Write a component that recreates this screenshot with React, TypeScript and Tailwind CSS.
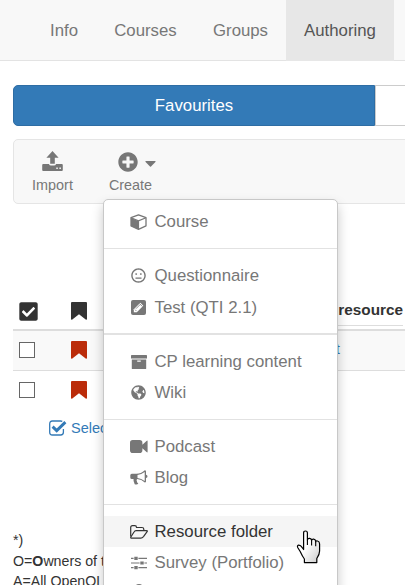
import type { ReactNode } from "react";
import {
  FaCheckSquare,
  FaGlobeAmericas,
  FaPlusCircle,
  FaRegMeh,
} from "react-icons/fa";

const UploadIcon = () => (
  <svg width="21" height="21" viewBox="0 0 21 21" fill="currentColor">
    <path d="M10.5 0 16.6 6.8H12.8V12.8H8.2V6.8H4.4Z" />
    <path
      fillRule="evenodd"
      d="M1.2 12.9H6.9Q7.5 14.5 9 14.5H12Q13.5 14.5 14.1 12.9H19.8Q20.8 12.9 20.8 13.9V18.9Q20.8 19.9 19.8 19.9H1.2Q.2 19.9.2 18.9V13.9Q.2 12.9 1.2 12.9ZM14.3 16.5V18H15.8V16.5ZM17.4 16.5V18H18.9V16.5Z"
    />
  </svg>
);

const CaretIcon = () => (
  <svg width="11" height="6" viewBox="0 0 11 6" className="mt-[5px] shrink-0" fill="currentColor">
    <path d="M.8 0H10.2Q11 .2 10.4 1L6 5.6Q5.5 6 5 5.6L.6 1Q0 .2.8 0Z" />
  </svg>
);

const BookmarkIcon = () => (
  <svg width="16" height="18" viewBox="0 0 16 18" fill="currentColor">
    <path d="M1 0H15Q16 0 16 1V17Q16 18 15 17.8L8 12.2 1 17.8Q0 18 0 17V1Q0 0 1 0Z" />
  </svg>
);

const CheckOutlineIcon = () => (
  <svg width="18" height="16" viewBox="0 0 18 16" fill="none" stroke="currentColor">
    <path d="M14.4 9V12.2Q14.4 15 11.6 15H3.4Q.7 15 .7 12.2V4Q.7 1 3.4 1H11.6Q12.7 1 13.3 1.3" strokeWidth="1.3" />
    <path d="M3.6 6.6 7.7 10.6 16.4 2.1" strokeWidth="2.9" />
  </svg>
);

const CubeIcon = () => (
  <svg width="17" height="16" viewBox="0 0 17 16">
    <path d="M8.5.8 16 3.7V11.9L8.5 15.3 1 11.9V3.7Z" fill="none" stroke="currentColor" strokeWidth="1.3" strokeLinejoin="round" />
    <path d="M1 4 8.5 7V15.3L1 11.9Z" fill="currentColor" />
    <path d="M1 3.8 8.5 6.8 16 3.8M8.5 7V15" fill="none" stroke="currentColor" strokeWidth="1.2" />
  </svg>
);

const PencilSquareIcon = () => (
  <svg width="15" height="15" viewBox="0 0 15 15">
    <rect width="15" height="15" rx="2" fill="currentColor" />
    <path d="M2.8 9.2 9.3 2.7 12.3 5.7 5.8 12.2H2.8Z" fill="#fff" />
    <path d="m4 9.6 1.5 1.5M5 8.7 9.2 4.5M8.5 3.6l2.9 2.9" stroke="currentColor" strokeWidth=".8" />
  </svg>
);

const ArchiveIcon = () => (
  <svg width="16" height="14" viewBox="0 0 16 14" fill="currentColor">
    <path d="M.6 0H15.4Q16 0 16 .6V3.4H0V.6Q0 0 .6 0Z" />
    <path fillRule="evenodd" d="M.8 4.4H15.2V13.4Q15.2 14 14.6 14H1.4Q.8 14 .8 13.4ZM6.4 5.5Q5.8 6.1 6.4 6.7H9.6Q10.2 6.1 9.6 5.5Z" />
  </svg>
);

const VideoIcon = () => (
  <svg width="18" height="13" viewBox="0 0 18 13" fill="currentColor">
    <path d="M2.7 0H9.6Q12.4 0 12.4 2.8V4.8L16.5.9Q17.6 0 17.6 1.3V11.7Q17.6 13 16.5 12.1L12.4 8.2V10.2Q12.4 13 9.6 13H2.7Q0 13 0 10.2V2.8Q0 0 2.7 0Z" />
  </svg>
);

const BullhornIcon = () => (
  <svg width="18" height="15" viewBox="0 0 18 15">
    <path
      d="M14.8.3Q16 .3 16 1.5V4.8Q17.5 5.2 17.5 6.4T16 8V11.5Q16 12.6 14.8 12.6 11.5 9.4 7.2 9 6 10 6.9 11.2 6.5 12.1 8.3 13.5 7.3 15 4.7 14.2 3.1 11.3 3.5 9.1H1.8Q.3 9.1.3 7.6V5.3Q.3 3.8 1.8 3.8H6.5Q11 3.8 14.8.3Z"
      fill="currentColor"
    />
    <path d="M14.7 2Q11.2 4.7 7.5 4.9V8Q11.2 8.3 14.7 11Z" fill="#fff" />
  </svg>
);

const FolderIcon = () => (
  <svg width="18" height="14" viewBox="0 0 18 14" fill="none" stroke="currentColor" strokeWidth="1.2" strokeLinejoin="round">
    <path d="M.7 11.6V2.5Q.7.7 2.5.7H4.8Q6.5.7 6.5 2.5H12Q13.8 2.5 13.8 4.3V5.6" />
    <path d="M6 5.6H16.4Q17.9 5.6 17.1 6.7L13.5 11.6Q12.2 13.2 10.8 13.2H2Q.1 13.2 1 11.7L4 7Q4.8 5.6 6 5.6Z" />
  </svg>
);

const SlidersIcon = () => (
  <svg width="16" height="14" viewBox="0 0 16 14" stroke="currentColor" strokeWidth="1.2">
    <path d="M0 2.4H2.6M7.4 2.4H16M0 7H8.6M13.4 7H16M0 11.6H2.6M7.4 11.6H16" />
    <path d="M3.3 2.4H6.7M9.3 7H12.7M3.3 11.6H6.7" strokeWidth="3.2" />
  </svg>
);

const HandCursor = () => (
  <svg width="25" height="34" viewBox="0 0 25 34">
    <defs>
      <linearGradient id="hand" x1="0" y1="0" x2="1" y2="1">
        <stop offset=".45" stopColor="#fff" />
        <stop offset="1" stopColor="#c9c9c9" />
      </linearGradient>
    </defs>
    <path
      d="M7.6 19.5V3Q7.6 1 9.5 1T11.4 3V10Q11.6 8.2 13.6 8.4 15.6 8.6 15.6 10.6 15.8 8.9 17.7 9.2 19.7 9.5 19.7 11.8 19.9 10.5 21.6 11 23.6 11.5 23.6 14V21Q23.6 24.5 20.8 28.5V32.6H8.4V29Q6.5 26.5 4.2 21.5L1.7 17.5Q1 15.6 2.5 15.2 4.5 15 6.3 17.7Z"
      fill="url(#hand)"
      stroke="#000"
      strokeWidth="1.2"
      strokeLinejoin="round"
    />
    <path d="M11.4 10V15M15.6 10.8V15.5M19.7 12V16.2" stroke="#000" strokeWidth="1.1" />
  </svg>
);

function MenuItem({ icon, label, active = false }: { icon: ReactNode; label: string; active?: boolean }) {
  return (
    <li className={active ? "flex h-[31px] items-center bg-[#f5f5f5] pl-[26px] text-[#333]" : "flex h-[31px] items-center pl-[26px] text-[#777]"}>
      <span className="-ml-px flex w-[19px] justify-center">{icon}</span>
      <span className="ml-[6.5px] whitespace-nowrap">{label}</span>
    </li>
  );
}

const Divider = () => <li className="mt-[11px] mb-[11px] h-px bg-[#e2e2e2]" />;

function CreateMenu() {
  return (
    <ul className="absolute top-[199px] left-[103px] h-[400px] w-[235px] rounded-t-[5px] border border-[#c8c8c8] bg-white pt-[6px] text-[16.8px] shadow-[0_6px_12px_rgba(0,0,0,0.22)]">
      <MenuItem icon={<CubeIcon />} label="Course" />
      <Divider />
      <MenuItem icon={<FaRegMeh size={15} />} label="Questionnaire" />
      <li className="h-px" />
      <MenuItem icon={<PencilSquareIcon />} label="Test (QTI 2.1)" />
      <li className="mt-[10px] mb-[11px] h-[2px] bg-[#e2e2e2]" />
      <MenuItem icon={<ArchiveIcon />} label="CP learning content" />
      <MenuItem icon={<FaGlobeAmericas size={15} />} label="Wiki" />
      <Divider />
      <MenuItem icon={<VideoIcon />} label="Podcast" />
      <MenuItem icon={<BullhornIcon />} label="Blog" />
      <Divider />
      <MenuItem icon={<FolderIcon />} label="Resource folder" active />
      <MenuItem icon={<SlidersIcon />} label="Survey (Portfolio)" />
      <li className="flex h-[31px] pt-[6px] pl-[31px] text-[#777]">
        <span className="h-2 w-2 rounded-full bg-[#777]" />
      </li>
    </ul>
  );
}

export default function App() {
  return (
    <div className="relative h-[585px] w-[405px] overflow-hidden bg-white font-['Liberation_Sans',Arial,sans-serif] text-[#333]">
      <nav className="flex h-[61px] border-b border-[#e3e3e3] bg-[#f8f8f8] pl-[32px] text-[16.8px] text-[#777]">
        <a className="flex h-[61px] w-[64px] items-center justify-center">Info</a>
        <a className="flex h-[61px] w-[99px] items-center justify-center">Courses</a>
        <a className="flex h-[61px] w-[91px] items-center justify-center">Groups</a>
        <a className="flex h-[61px] w-[108px] items-center justify-center bg-[#e7e7e7] text-[#555]">Authoring</a>
      </nav>

      <div className="mt-[24px] ml-[13px] flex h-[41px] text-[16.8px]">
        <button className="w-[362px] shrink-0 rounded-l-[5px] border border-[#2e6da4] bg-[#337ab7] text-white">Favourites</button>
        <button className="w-[60px] shrink-0 border border-[#ccc] bg-white" />
      </div>

      <div className="mt-[13px] -mr-2 ml-[13px] flex h-[65px] rounded-[5px] border border-[#e5e5e5] bg-[#f8f8f8] text-[14.4px] text-[#777]">
        <div className="ml-[14px] flex w-[49px] flex-col items-center pt-[11px]">
          <UploadIcon />
          <span className="mt-[5px] leading-[17px]">Import</span>
        </div>
        <div className="ml-[29px] flex w-[49px] flex-col items-center pt-[11px]">
          <div className="flex h-[21px] items-center gap-[7px] pl-[13px]">
            <FaPlusCircle size={20} className="shrink-0" />
            <CaretIcon />
          </div>
          <span className="mt-[5px] leading-[17px]">Create</span>
        </div>
      </div>

      <div className="mt-[90px] ml-[13px]">
        <div className="flex h-[37px] items-center border-b-2 border-[#ddd] pb-px">
          <FaCheckSquare size={21} className="ml-[5px]" />
          <span className="ml-[32px]">
            <BookmarkIcon />
          </span>
          <span className="mt-[4px] mr-[2px] ml-auto flex h-[26px] items-center border-b border-[#ddd] pb-[4px] text-[15.3px] font-bold">Learning resource</span>
        </div>
        <div className="flex h-[40px] items-center border-b border-[#ddd] bg-[#f9f9f9] pb-[2px]">
          <span className="ml-[6px] h-4 w-4 border border-[#666] bg-white" />
          <span className="ml-[36px] text-[#bb2c0a]">
            <BookmarkIcon />
          </span>
          <span className="mr-[65px] ml-auto text-[15px] text-[#337ab7]">Content</span>
        </div>
        <div className="flex h-[38px] items-center pb-[1px]">
          <span className="ml-[6px] h-4 w-4 border border-[#666] bg-white" />
          <span className="ml-[36px] text-[#bb2c0a]">
            <BookmarkIcon />
          </span>
        </div>
        <div className="ml-[36px] flex h-[38px] items-center gap-[4px] text-[14.5px] text-[#337ab7]">
          <CheckOutlineIcon />
          <span className="pt-px">Select all</span>
        </div>
      </div>

      <div className="mt-[83px] ml-[13px] text-[14.2px] leading-[20.5px]">
        <p>*)</p>
        <p>
          O=<b>O</b>wners of the
        </p>
        <p>A=All OpenOLAT</p>
      </div>

      <CreateMenu />
      <div className="absolute top-[530px] left-[296px]">
        <HandCursor />
      </div>
    </div>
  );
}
